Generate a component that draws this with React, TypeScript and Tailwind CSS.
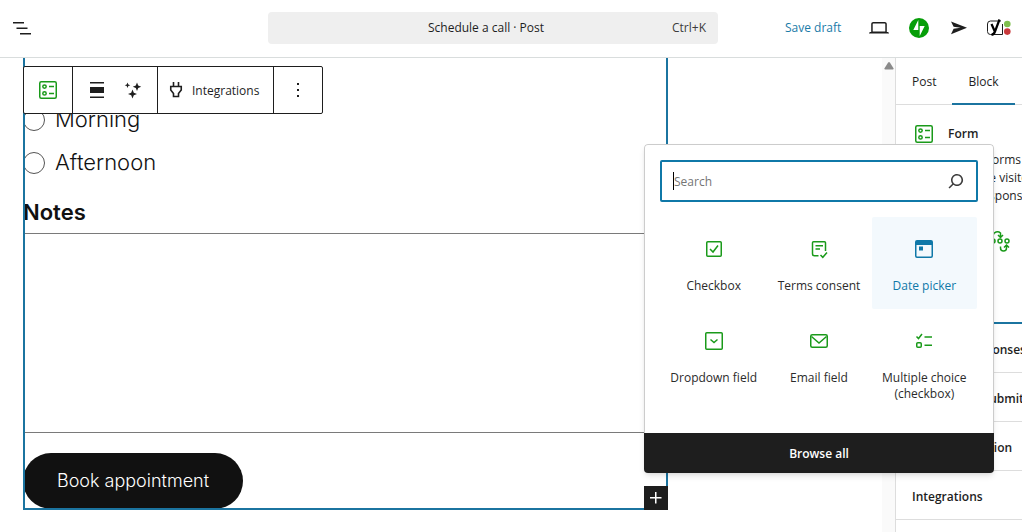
import type { ReactNode } from 'react';
import clsx from 'clsx';

interface BlockItem {
  label: string;
  icon: ReactNode;
  active?: boolean;
}

interface IconProps {
  children: ReactNode;
  className?: string;
}

// 24px icon with filled shapes
function Icon({ children, className }: IconProps) {
  return (
    <svg viewBox="0 0 24 24" fill="currentColor" aria-hidden="true" className={clsx('size-6 shrink-0', className)}>
      {children}
    </svg>
  );
}

// 24px icon with outlined shapes
function LineIcon({ children, className }: IconProps) {
  return (
    <svg
      viewBox="0 0 24 24"
      fill="none"
      stroke="currentColor"
      strokeWidth="1.5"
      aria-hidden="true"
      className={clsx('size-6 shrink-0', className)}
    >
      {children}
    </svg>
  );
}

function FormIcon({ className }: { className?: string }) {
  return (
    <LineIcon className={clsx('text-[#1a9a1a]', className)}>
      <rect x="3.75" y="3.75" width="16.5" height="16.5" rx="1.5" />
      <circle cx="8.5" cy="8.6" r="1.7" />
      <circle cx="8.5" cy="15.4" r="1.7" />
      <path d="M13 8.6h5M13 15.4h5" />
    </LineIcon>
  );
}

const blocks: BlockItem[] = [
  {
    label: 'Checkbox',
    icon: (
      <LineIcon>
        <rect x="4.75" y="4.75" width="14.5" height="14.5" rx="1" />
        <path d="M8 12l3 3 5-6.5" />
      </LineIcon>
    ),
  },
  {
    label: 'Terms consent',
    icon: (
      <LineIcon>
        <path d="M11.5 18.75h-4a2 2 0 0 1-2-2V5.75a1 1 0 0 1 1-1h11a1 1 0 0 1 1 1V14" />
        <path d="M8.5 8.75h7.5M8.5 12h4.5M13.5 18l2.3 2.3L20 15.5" />
      </LineIcon>
    ),
  },
  {
    label: 'Date picker',
    active: true,
    icon: (
      <Icon>
        <path
          fillRule="evenodd"
          d="M5 3h14a2 2 0 0 1 2 2v14a2 2 0 0 1-2 2H5a2 2 0 0 1-2-2V5a2 2 0 0 1 2-2zm-.5 5v11c0 .3.2.5.5.5h14c.3 0 .5-.2.5-.5V8h-15zM7 9.5h4v4H7v-4z"
        />
      </Icon>
    ),
  },
  {
    label: 'Dropdown field',
    icon: (
      <LineIcon>
        <rect x="3.75" y="3.75" width="16.5" height="16.5" rx="1" />
        <path d="M8.5 10.5l3.5 3 3.5-3" />
      </LineIcon>
    ),
  },
  {
    label: 'Email field',
    icon: (
      <LineIcon>
        <rect x="3.75" y="5.75" width="16.5" height="12.5" rx="1.5" />
        <path d="M4.5 7.5l7.5 6.5 7.5-6.5" />
      </LineIcon>
    ),
  },
  {
    label: 'Multiple choice (checkbox)',
    icon: (
      <LineIcon>
        <path d="M4.5 7.5l2 2L10 5M12.5 8H20M12.5 16.2H20" />
        <rect x="4.75" y="13.75" width="4.5" height="4.5" rx="1" />
      </LineIcon>
    ),
  },
];

const panels = ['Organize responses', 'Action after submit', 'Form notification', 'Integrations'];

function Header() {
  return (
    <header className="flex h-[58px] shrink-0 items-center border-b border-[#d9dddd] pb-0.5">
      <div className="flex min-w-0 flex-1 pl-2.5">
        <button type="button" aria-label="Document overview">
          <Icon>
            <path d="M3 6h11v1.5H3V6Zm3.5 5.5h11V13h-11v-1.5ZM21 17H10v1.5h11V17Z" />
          </Icon>
        </button>
      </div>
      <button type="button" className="flex h-8 w-[450px] items-center rounded bg-[#efefef] px-3">
        <span className="flex-1 pl-5 text-center">Schedule a call · Post</span>
        <span className="text-[#3c3c3c]">Ctrl+K</span>
      </button>
      <div className="flex w-[304px] items-center pl-[67px]">
        <button type="button" className="w-[82px] text-left text-[#1a7ba8]">
          Save draft
        </button>
        <div className="flex items-center gap-4">
          <button type="button" aria-label="View">
            <Icon>
              <path d="M20.5 16h-.7V8c0-1.1-.9-2-2-2H6.2c-1.1 0-2 .9-2 2v8h-.7c-.8 0-1.5.7-1.5 1.5h20c0-.8-.7-1.5-1.5-1.5zM5.7 8c0-.3.2-.5.5-.5h11.6c.3 0 .5.2.5.5v7.6H5.7V8z" />
            </Icon>
          </button>
          <button type="button" aria-label="Jetpack">
            <Icon>
              <circle cx="12" cy="12" r="10" fill="#069e08" />
              <path d="M11.3 13.9h-5l5-10v10zM12.7 20.1v-10h5l-5 10z" fill="#fff" />
            </Icon>
          </button>
          <button type="button" aria-label="Publish">
            <Icon>
              <path d="M4 5.6l16 6.2-16 6.4 2.6-5.4 7-1-7-1z" />
            </Icon>
          </button>
          <button type="button" aria-label="Yoast SEO">
            <Icon>
              <path d="M14 5H3.5a3 3 0 0 0-3 3v7.5a3 3 0 0 0 3 3H15.5V8" fill="none" stroke="currentColor" />
              <path
                d="M4.5 8l3.300 7.500M12.500 3.500L8 15.500c-.8 2.200-1.700 3.200-3.500 3.200"
                fill="none"
                stroke="#000"
                strokeWidth="2.2"
              />
              <circle cx="20.3" cy="8" r="3.3" fill="#7fbf4d" />
              <circle cx="20.3" cy="15.6" r="3.3" fill="#c9393c" />
            </Icon>
          </button>
        </div>
      </div>
    </header>
  );
}

function BlockToolbar() {
  return (
    <div
      role="toolbar"
      className="absolute top-2 left-0 z-10 flex h-12 divide-x divide-[#1e1e1e] rounded-[2px] border border-[#1e1e1e] bg-white"
    >
      <button type="button" aria-label="Form" className="w-[49px] px-3">
        <FormIcon />
      </button>
      <div className="flex w-[85px] items-center gap-3 px-3">
        <button type="button" aria-label="Align">
          <Icon>
            <path d="M5 4h14v1.5H5zM5 9h14v6H5zM5 18.5h14V20H5z" />
          </Icon>
        </button>
        <button type="button" aria-label="AI Assistant">
          <Icon>
            <path d="M16 4.500l1.200 3 3 1.200-3 1.200-1.200 3-1.200-3-3-1.200 3-1.200zM6.500 4.500l.8 2 2 .8-2 .8-.8 2-.8-2-2-.8 2-.8zM11.500 11.500l1.300 3.200 3.200 1.300-3.200 1.300-1.300 3.200-1.300-3.200L7 16l3.200-1.300z" />
          </Icon>
        </button>
      </div>
      <button type="button" className="flex w-[116px] items-center gap-1 pl-1.5">
        <LineIcon>
          <path d="M9.5 4v4.500M14.500 4v4.500M6.750 8.500h10.500v3.500L14.500 15.500V18.500h-5V15.500L6.750 12z" strokeWidth="1.6" />
        </LineIcon>
        <span className="pt-0.5">Integrations</span>
      </button>
      <button type="button" aria-label="Options" className="w-12 px-3">
        <Icon>
          <path d="M13 19h-2v-2h2v2zm0-6h-2v-2h2v2zm0-6h-2V5h2v2z" />
        </Icon>
      </button>
    </div>
  );
}

function Inserter() {
  return (
    <div className="absolute right-0 bottom-full mb-[13px] -mr-[326px] w-[350px] overflow-hidden rounded bg-white shadow-md">
      <div className="rounded-t border-x border-t border-[#ccc] px-[15px] pt-[15px] pb-4">
        <div className="flex h-[42px] items-center rounded-[2px] border-2 border-[#0f78a8] pr-2 pl-[11px]">
          <span className="h-[18px] w-px bg-black" />
          <input
            type="text"
            aria-label="Search"
            placeholder="Search"
            className="min-w-0 flex-1 pt-0.5 outline-none placeholder:text-[#757575]"
          />
          <Icon className="text-[#3c3c3c]">
            <path d="M13 5c-3.3 0-6 2.700-6 6 0 1.400.5 2.700 1.300 3.700l-3.800 3.800 1.100 1.100 3.800-3.800c1 .8 2.300 1.300 3.700 1.300 3.300 0 6-2.700 6-6S16.300 5 13 5zm0 10.500c-2.500 0-4.500-2-4.500-4.500s2-4.500 4.500-4.500 4.500 2 4.500 4.500-2 4.500-4.500 4.500z" />
          </Icon>
        </div>
        <div className="mx-px mt-[15px] grid grid-cols-3">
          {blocks.map((b) => (
            <button
              key={b.label}
              type="button"
              className={clsx(
                'flex flex-col items-center justify-start gap-[17px] rounded-[2px] pt-5 pb-[15px] leading-4',
                b.active ? 'bg-[#f3f9fd] text-[#0f78a8]' : 'text-[#2b2b2b]',
              )}
            >
              <span className={b.active ? 'text-[#0f78a8]' : 'text-[#1a9a1a]'}>{b.icon}</span>
              <span className="px-2">{b.label}</span>
            </button>
          ))}
        </div>
      </div>
      <button type="button" className="block h-10 w-full bg-[#1e1e1e] pt-0.5 font-semibold text-white">
        Browse all
      </button>
    </div>
  );
}

function Canvas() {
  return (
    <main className="min-w-0 flex-1 pr-[214px] pl-[23px]">
      <div className="relative pt-10 pb-px font-['Inter','Liberation_Sans',sans-serif] text-[#111]">
        <form>
          {['Morning', 'Afternoon'].map((time) => (
            <label key={time} className="flex h-[43px] items-center gap-2.5 text-[22px] font-light">
              <input
                type="radio"
                name="time"
                className="size-[22px] appearance-none rounded-full border border-[#555] bg-white"
              />
              {time}
            </label>
          ))}
          <label htmlFor="notes" className="block pt-3.5 pb-[7px] text-[22px] leading-7 font-semibold">
            Notes
          </label>
          <textarea id="notes" className="block h-[200px] w-full resize-none border border-[#7a7a7a]" />
          <button
            type="button"
            className="mt-5 block h-14 w-[220px] rounded-full bg-[#111] text-lg font-light text-white"
          >
            Book appointment
          </button>
        </form>
        {/* Selection outline drawn above the form */}
        <div className="pointer-events-none absolute inset-0 border-x-2 border-b-2 border-[#1b74a0]" />
        <div className="font-['Open_Sans','Noto_Sans',sans-serif] text-[#1e1e1e]">
          <BlockToolbar />
          <div className="absolute right-0 bottom-0 z-20 size-6">
            <button type="button" aria-label="Add block" className="size-6 bg-[#1e1e1e] text-white">
              <Icon>
                <path d="M11 12.5V17.5H12.5V12.5H17.5V11H12.5V6H11V11H6V12.5H11Z" />
              </Icon>
            </button>
            <Inserter />
          </div>
        </div>
      </div>
    </main>
  );
}

function Sidebar() {
  return (
    <aside className="w-[127px] shrink-0 overflow-hidden border-l border-[#ddd]">
      <div className="w-[280px]">
        <div className="flex h-[47px] border-b border-[#ddd]">
          <button type="button" className="px-4 pt-0.5">
            Post
          </button>
          <button type="button" className="-mb-px border-b-2 border-[#1b74a0] px-4 pt-0.5">
            Block
          </button>
        </div>
        <div className="flex gap-3 px-4 pt-[17px]">
          <FormIcon />
          <div>
            <h2 className="leading-6 font-semibold">Form</h2>
            <p className="mt-[5px] leading-[18px]">
              Create forms to collect
              <br />
              organize visitor data
              <br />
              their responses.
            </p>
          </div>
        </div>
        <div className="flex h-[117px] pt-6 pl-[92px] text-[#1a9a1a]">
          <LineIcon>
            <circle cx="5" cy="12" r="2" />
            <circle cx="12" cy="12" r="2" />
            <circle cx="19" cy="12" r="2" />
            <path d="M5 6.500a4.500 4.500 0 0 1 7.500-2.500V8M10 6l2.500 2.500L15 6M18.500 16.500v2.500a3 3 0 0 1-6 0v-1.500M16 18.500l2.500-2.500 2.500 2.500" />
          </LineIcon>
        </div>
        <div className="border-t-2 border-[#1b74a0]">
          {panels.map((panel) => (
            <button
              key={panel}
              type="button"
              className="flex h-[49px] w-full items-center border-b border-[#ddd] px-4 pt-1 font-semibold"
            >
              {panel}
            </button>
          ))}
        </div>
      </div>
    </aside>
  );
}

export default function App() {
  return (
    <div className="flex h-screen flex-col overflow-hidden bg-white font-['Open_Sans','Noto_Sans',sans-serif] text-[12px] text-[#1e1e1e]">
      <Header />
      <div className="flex min-h-0 flex-1">
        <Canvas />
        {/* Scrollbar track */}
        <div className="w-[13px] shrink-0 bg-[#fafafa] pt-1">
          <svg viewBox="0 0 10 8" className="mx-auto h-2 w-2.5" fill="#8a8a8a" aria-hidden="true">
            <path d="M4 .8a1.200 1.200 0 0 1 2 0l3.500 5.400c.4.700 0 1.300-.8 1.300H1.300c-.8 0-1.200-.6-.8-1.300z" />
          </svg>
        </div>
        <Sidebar />
      </div>
    </div>
  );
}
